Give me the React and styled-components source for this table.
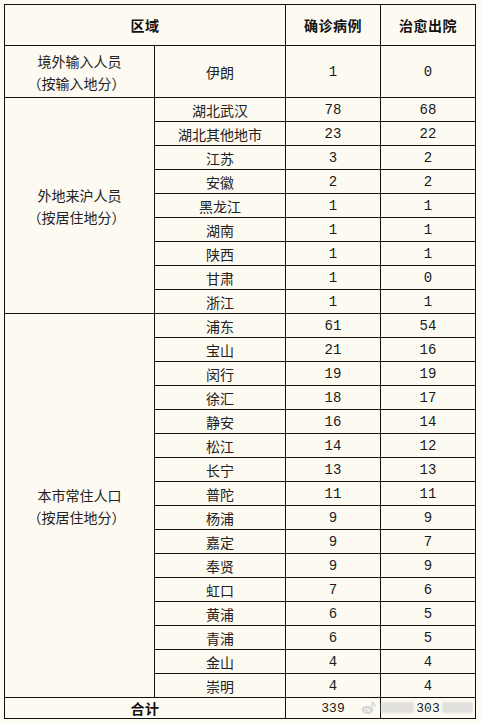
import React from "react";
import styled, { createGlobalStyle } from "styled-components";

const GlobalStyle = createGlobalStyle`
  html, body {
    margin: 0;
    padding: 0;
    background: #fdfaf1;
  }
  body {
    padding: 4px 0 0 4px;
    font-family: "Noto Sans CJK SC", "Noto Sans", sans-serif;
    color: #1a1a1a;
  }
`;

const groups = [
  {
    label: "境外输入人员",
    note: "（按输入地分）",
    rows: [["伊朗", 1, 0]],
    tall: true,
  },
  {
    label: "外地来沪人员",
    note: "（按居住地分）",
    rows: [
      ["湖北武汉", 78, 68],
      ["湖北其他地市", 23, 22],
      ["江苏", 3, 2],
      ["安徽", 2, 2],
      ["黑龙江", 1, 1],
      ["湖南", 1, 1],
      ["陕西", 1, 1],
      ["甘肃", 1, 0],
      ["浙江", 1, 1],
    ],
  },
  {
    label: "本市常住人口",
    note: "（按居住地分）",
    rows: [
      ["浦东", 61, 54],
      ["宝山", 21, 16],
      ["闵行", 19, 19],
      ["徐汇", 18, 17],
      ["静安", 16, 14],
      ["松江", 14, 12],
      ["长宁", 13, 13],
      ["普陀", 11, 11],
      ["杨浦", 9, 9],
      ["嘉定", 9, 7],
      ["奉贤", 9, 9],
      ["虹口", 7, 6],
      ["黄浦", 6, 5],
      ["青浦", 6, 5],
      ["金山", 4, 4],
      ["崇明", 4, 4],
    ],
  },
];

const App = () => {
  return (
    <>
      <GlobalStyle />
      <Table>
        <colgroup>
          <col style={{ width: 150 }} />
          <col style={{ width: 131 }} />
          <col style={{ width: 95 }} />
          <col style={{ width: 95 }} />
        </colgroup>
        <tbody>
          <Row $h={41}>
            <HeadCell colSpan={2}>区域</HeadCell>
            <HeadCell>确诊病例</HeadCell>
            <HeadCell>治愈出院</HeadCell>
          </Row>
          {groups.map((g) =>
            g.rows.map((r, i) => (
              <Row key={g.label + r[0]} $h={g.tall ? 52 : 24}>
                {i === 0 && (
                  <GroupCell rowSpan={g.rows.length}>
                    <div>{g.label}</div>
                    <div>{g.note}</div>
                  </GroupCell>
                )}
                <Cell>{r[0]}</Cell>
                <NumCell>{r[1]}</NumCell>
                <NumCell>{r[2]}</NumCell>
              </Row>
            ))
          )}
          <Row $h={20}>
            <HeadCell colSpan={2}>合计</HeadCell>
            <NumCell $small>339</NumCell>
            <NumCell $small>303</NumCell>
          </Row>
        </tbody>
      </Table>
      {/* blurred weibo watermark over the total row */}
      <Watermark>
        <svg width="17" height="15" viewBox="0 0 17 15">
          <ellipse cx="7" cy="10" rx="6.5" ry="4.5" fill="#d6d6d6" />
          <ellipse cx="6.5" cy="10.5" rx="3" ry="2.2" fill="#f2f2f2" />
          <circle cx="6" cy="10.8" r="1" fill="#bbbbbb" />
          <path d="M11 2 A4.5 4.5 0 0 1 15.5 6.5" stroke="#cccccc" strokeWidth="1.3" fill="none" />
          <path d="M11 4.2 A2.3 2.3 0 0 1 13.3 6.5" stroke="#cccccc" strokeWidth="1.1" fill="none" />
        </svg>
        <Smudge $w={36} />
        <Gap />
        <Smudge $w={34} />
      </Watermark>
    </>
  );
};

export default App;

const Table = styled.table`
  border-collapse: collapse;
  table-layout: fixed;
  width: 472px;
  background: #fdfaf1;
  td {
    border: 1px solid #111;
    padding: 0;
    text-align: center;
    vertical-align: middle;
  }
`;

const Row = styled.tr`
  height: ${(p) => p.$h}px;
`;

const HeadCell = styled.td`
  font-size: 14px;
  font-weight: bold;
  letter-spacing: 0.5px;
  color: #111;
`;

const Cell = styled.td`
  font-size: 14px;
  line-height: 22px;
  color: #222;
`;

const GroupCell = styled.td`
  font-size: 14px;
  line-height: 22px;
  color: #222;
  div + div {
    margin-left: -6px;
  }
`;

const NumCell = styled.td`
  font-family: "Liberation Mono", "DejaVu Sans Mono", monospace;
  font-size: ${(p) => (p.$small ? 13 : 14)}px;
  color: #1a1a1a;
`;

const Watermark = styled.div`
  position: absolute;
  left: 361px;
  top: 699px;
  width: 112px;
  height: 16px;
  display: flex;
  align-items: center;
  gap: 4px;
  pointer-events: none;
`;

const Smudge = styled.span`
  width: ${(p) => p.$w}px;
  height: 11px;
  background: rgba(205, 205, 205, 0.6);
  filter: blur(1.2px);
  border-radius: 2px;
`;

const Gap = styled.span`
  width: 22px;
`;
